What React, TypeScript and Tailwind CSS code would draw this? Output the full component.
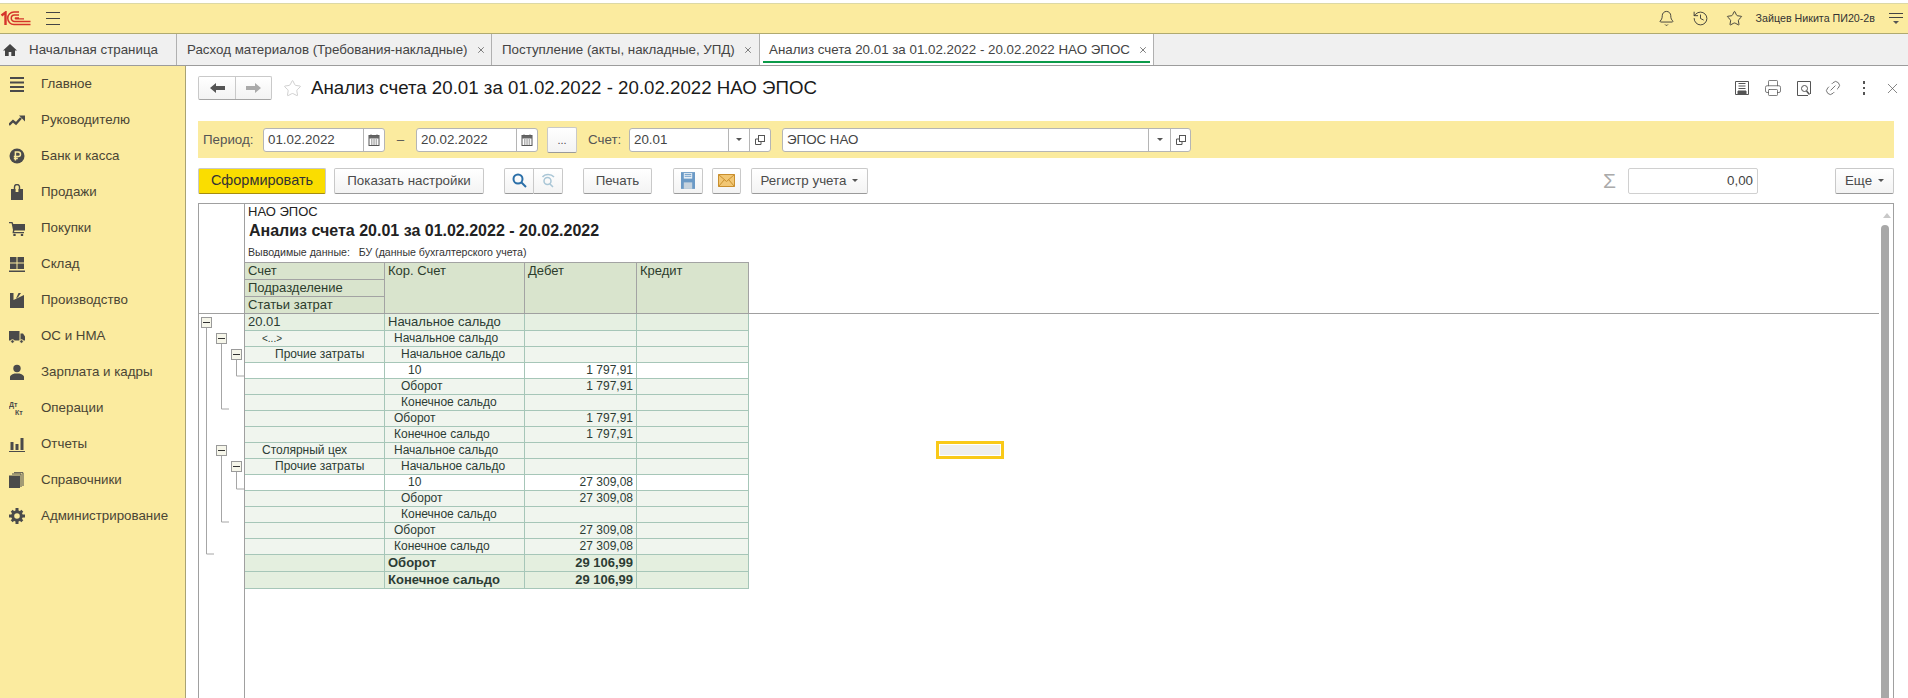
import { Bell, History, Star, Printer, Link2, X } from 'lucide-react';
import type { ReactNode } from 'react';

// ── Small icons ──────────────────────────────────

function CalendarIcon() {
  return (
    <svg width="12" height="12" viewBox="0 0 12 12">
      <path d="M3 0.5v2M9 0.5v2" stroke="#444" />
      <rect x="1" y="1.5" width="10" height="10" fill="#fff" stroke="#555" />
      <rect x="1" y="1.5" width="10" height="3" fill="#666" />
      <path d="M3 6h1.5M5.3 6h1.5M7.6 6h1.5M3 8h1.5M5.3 8h1.5M7.6 8h1.5M3 10h1.5M5.3 10h1.5M7.6 10h1.5" stroke="#666" />
    </svg>
  );
}

function OpenIcon() {
  return (
    <svg width="12" height="12" viewBox="0 0 12 12" fill="none" stroke="#555">
      <rect x="4.5" y="1.5" width="6" height="6" />
      <path d="M4 5H1.5v5.5H7V8" />
    </svg>
  );
}

function Caret() {
  return <span className="inline-block w-0 h-0 border-x-[3px] border-x-transparent border-t-[3px] border-t-[#555]" />;
}

const sideIcons: Record<string, ReactNode> = {
  main: <path d="M1 1h14v2H1zM1 5.5h14v2H1zM1 10h14v2H1zM1 14h14v2H1z" />,
  boss: (
    <>
      <path d="M0 13l4-4 3 2.5L12 6" fill="none" stroke="#4a4a4a" strokeWidth="2.4" />
      <path d="M10 3.5h6v6z" />
    </>
  ),
  bank: (
    <>
      <circle cx="8" cy="8" r="7.5" />
      <path d="M6.4 12.5V4h2.8a2 2 0 0 1 0 4.6H4.8M4.8 10.5h4" fill="none" stroke="#fbeb9f" strokeWidth="1.5" />
    </>
  ),
  sales: (
    <>
      <path d="M2 5h12v11H2z" />
      <path d="M5.5 8V3a2.5 2.5 0 0 1 5 0v5" fill="none" stroke="#4a4a4a" strokeWidth="1.4" />
      <path d="M6.6 5h2.8v3H6.6z" fill="#fbeb9f" />
    </>
  ),
  buy: (
    <>
      <path d="M0 2h3.5l.8 2H16v6.5H5.5L5 12h10v1.2H3.5L4 10 2.6 3.2H0z" />
      <circle cx="5.5" cy="15" r="1.3" />
      <circle cx="13" cy="15" r="1.3" />
    </>
  ),
  store: <path d="M1 1h6.5v5.5H1zM8.5 1H15v5.500H8.500zM1 7.500h6.500V13H1zM8.500 7.500H15V13H8.500zM0 14.500h16V16H0z" />,
  factory: <path d="M1 16V1h3.500v7L15 3v13zM7 6.500L9.500 1H12L9 5.300z" />,
  truck: (
    <>
      <path d="M0 3h10.500v9.500H0zM11.500 5.500H14l2 3v4h-4.500z" />
      <circle cx="3.500" cy="13.500" r="1.800" stroke="#fbeb9f" />
      <circle cx="12.500" cy="13.500" r="1.800" stroke="#fbeb9f" />
    </>
  ),
  person: (
    <>
      <circle cx="8" cy="4.500" r="3.700" />
      <path d="M1 16v-3c0-2 3-3 4.500-3.500h5c1.500.5 4.500 1.500 4.500 3.500v3z" />
    </>
  ),
  reports: <path d="M1.500 6h3v8h-3zM6.500 8h3v6h-3zM11.500 2h3v12h-3zM0 15h16v1H0z" />,
  refs: (
    <>
      <path d="M0 3.500h11V16H0z" />
      <path d="M12 15V2H3M14 14V.7H5" fill="none" stroke="#4a4a4a" />
    </>
  ),
  gear: (
    <>
      <circle cx="8" cy="8" r="4.300" fill="none" stroke="#4a4a4a" strokeWidth="3" />
      <path d="M6.500 0h3v3h-3zM6.500 13h3v3h-3zM0 6.500h3v3H0zM13 6.500h3v3h-3zM1.700 3.800l2-2 2 2-2 2zM10.300 3.800l2-2 2 2-2 2zM1.700 12.200l2-2 2 2-2 2zM10.300 12.200l2-2 2 2-2 2z" />
    </>
  ),
};

const SIDE_ITEMS = [
  ['main', 'Главное'],
  ['boss', 'Руководителю'],
  ['bank', 'Банк и касса'],
  ['sales', 'Продажи'],
  ['buy', 'Покупки'],
  ['store', 'Склад'],
  ['factory', 'Производство'],
  ['truck', 'ОС и НМА'],
  ['person', 'Зарплата и кадры'],
  ['ops', 'Операции'],
  ['reports', 'Отчеты'],
  ['refs', 'Справочники'],
  ['gear', 'Администрирование'],
];

function Btn({ className = '', children }: { className?: string; children: ReactNode }) {
  return (
    <div className={`h-[26px] flex items-center justify-center rounded-[2px] border border-[#c9c9c9] border-b-[#9a9a9a] bg-linear-to-b from-white to-[#f3f3f3] text-[#4b4b4b] ${className}`}>
      {children}
    </div>
  );
}

function Field({ text, className, icons, iconW }: { text: string; className: string; icons: ReactNode[]; iconW: number[] }) {
  return (
    <div className={`h-[24px] flex rounded-[3px] border border-[#b5b5b5] bg-white text-[#444] ${className}`}>
      <div className="flex-1 pl-[4px] leading-[22px]">{text}</div>
      {icons.map((ic, i) => (
        <div key={i} className="flex items-center justify-center border-l border-[#b5b5b5]" style={{ width: iconW[i] }}>
          {ic}
        </div>
      ))}
    </div>
  );
}

// ── Report data ──────────────────────────────────

type Row = { a?: string; aPad?: number; b?: string; bPad?: number; d?: string; kind?: 'top' | 'white' | 'total' };

const ROWS: Row[] = [
  { a: '20.01', aPad: 3, b: 'Начальное сальдо', bPad: 3, kind: 'top' },
  { a: '<...>', aPad: 17, b: 'Начальное сальдо', bPad: 9 },
  { a: 'Прочие затраты', aPad: 30, b: 'Начальное сальдо', bPad: 16 },
  { b: '10', bPad: 23, d: '1 797,91', kind: 'white' },
  { b: 'Оборот', bPad: 16, d: '1 797,91' },
  { b: 'Конечное сальдо', bPad: 16 },
  { b: 'Оборот', bPad: 9, d: '1 797,91' },
  { b: 'Конечное сальдо', bPad: 9, d: '1 797,91' },
  { a: 'Столярный цех', aPad: 17, b: 'Начальное сальдо', bPad: 9 },
  { a: 'Прочие затраты', aPad: 30, b: 'Начальное сальдо', bPad: 16 },
  { b: '10', bPad: 23, d: '27 309,08', kind: 'white' },
  { b: 'Оборот', bPad: 16, d: '27 309,08' },
  { b: 'Конечное сальдо', bPad: 16 },
  { b: 'Оборот', bPad: 9, d: '27 309,08' },
  { b: 'Конечное сальдо', bPad: 9, d: '27 309,08' },
  { b: 'Оборот', bPad: 3, d: '29 106,99', kind: 'total' },
  { b: 'Конечное сальдо', bPad: 3, d: '29 106,99', kind: 'total' },
];

function TreeBox({ x, y }: { x: number; y: number }) {
  return (
    <g>
      <rect x={x + 0.5} y={y + 0.5} width="10" height="10" fill="#f6f6ea" stroke="#9a9a9a" />
      <path d={`M${x + 2} ${y + 5.5}h7`} stroke="#333" />
    </g>
  );
}

function Tree() {
  // coordinates are local to the gutter: x-199, y-314
  return (
    <svg width="45" height="280" className="shrink-0" fill="none">
      <path d="M7.500 13V240H15" stroke="#a6a6a6" />
      <path d="M22.500 29V95H30" stroke="#a6a6a6" />
      <path d="M37.500 45V62H45" stroke="#a6a6a6" />
      <path d="M22.500 141V208H30" stroke="#a6a6a6" />
      <path d="M37.500 157V175H45" stroke="#a6a6a6" />
      <TreeBox x={2} y={3} />
      <TreeBox x={17} y={19} />
      <TreeBox x={32} y={35} />
      <TreeBox x={17} y={131} />
      <TreeBox x={32} y={147} />
    </svg>
  );
}

const HEAD_CELL = 'border-r border-[#a3a3a3] bg-[#d9e4cd] px-[3px] leading-[16px] text-[#2c3c2c]';

export default function App() {
  return (
    <div className="w-[1908px] h-[698px] overflow-hidden flex flex-col bg-white text-[13.33px] font-['Liberation_Sans',Arial,sans-serif]">
      {/* Top bar */}
      <div className="h-[31px] shrink-0 mt-[3px] bg-[#fbeb9f] border-t border-t-[#dcd8a6] border-b border-b-[#b0aa70] flex items-center relative">
        <svg width="31" height="15" viewBox="0 0 31 15" fill="none">
          <path d="M1.500 4.500L5.500 1.500V14" stroke="#d5342b" strokeWidth="2.400" />
          <path d="M19 1h-5a6.200 6.200 0 0 0 0 12.500H30.500" stroke="#d5342b" strokeWidth="1.500" />
          <path d="M19 4h-4.500a3.200 3.200 0 0 0 0 6.500H30.500" stroke="#d5342b" strokeWidth="1.500" />
          <path d="M19 6.800h-3.500a.6.6 0 0 0 0 1H24" stroke="#d5342b" strokeWidth="1.200" />
        </svg>
        <div className="ml-[15px] w-[14px] flex flex-col gap-[5px]">
          <div className="h-px bg-[#444]" />
          <div className="h-px bg-[#444]" />
          <div className="h-px bg-[#444]" />
        </div>
        <div className="ml-auto flex items-center text-[#333]">
          <Bell size={17} strokeWidth={1.25} />
          <History size={17} strokeWidth={1.25} className="ml-[17px]" />
          <Star size={17} strokeWidth={1.25} className="ml-[17px]" />
          <span className="ml-[13px] text-[10.7px]">Зайцев Никита ПИ20-2в</span>
          <div className="ml-[14px] mr-[5px] w-[14px] flex flex-col items-center gap-[3px]">
            <div className="h-px w-full bg-[#444]" />
            <div className="h-px w-full bg-[#444]" />
            <Caret />
          </div>
        </div>
      </div>

      {/* Tabs */}
      <div className="h-[32px] shrink-0 bg-[#f0f0f0] border-b border-[#9c9c9c] flex text-[#444]">
        <div className="w-[177px] border-r border-[#b0b0b0] flex items-center">
          <svg width="14" height="12" viewBox="0 0 14 12" className="ml-[3px]" fill="#444">
            <path d="M7 0L14 6.500H12V12H8.300V8H5.700v4H2V6.500H0z" />
          </svg>
          <span className="ml-[12px]">Начальная страница</span>
        </div>
        <div className="w-[315px] border-r border-[#b0b0b0] flex items-center pl-[10px]">
          <span>Расход материалов (Требования-накладные)</span>
          <X size={10} className="ml-[8px] text-[#666]" />
        </div>
        <div className="w-[268px] border-r border-[#b0b0b0] flex items-center pl-[10px]">
          <span>Поступление (акты, накладные, УПД)</span>
          <X size={10} className="ml-[8px] text-[#666]" />
        </div>
        <div className="w-[394px] border-r border-[#b0b0b0] bg-white flex items-center pl-[9px] relative">
          <span>Анализ счета 20.01 за 01.02.2022 - 20.02.2022 НАО ЭПОС</span>
          <X size={10} className="ml-[8px] text-[#666]" />
          <div className="absolute left-[3px] right-[3px] bottom-[2px] h-[2px] bg-[#0c9b4a]" />
        </div>
      </div>

      <div className="flex-1 flex min-h-0">
        {/* Sidebar */}
        <div className="w-[186px] shrink-0 bg-[#fbeb9f] border-r border-[#a8a274] text-[#4a4535]">
          {SIDE_ITEMS.map(([key, label]) => (
            <div key={key} className="h-[36px] flex items-center">
              <div className="w-[34px] flex justify-center">
                {key === 'ops' ? (
                  <svg width="16" height="16" viewBox="0 0 16 16" fill="#4a4a4a" fontSize="7" fontWeight="700">
                    <text x="0" y="7" fontFamily="Liberation Sans">Дт</text>
                    <text x="6" y="15" fontFamily="Liberation Sans">Кт</text>
                  </svg>
                ) : (
                  <svg width="16" height="16" viewBox="0 0 16 16" fill="#4a4a4a">
                    {sideIcons[key]}
                  </svg>
                )}
              </div>
              <span className="ml-[7px]">{label}</span>
            </div>
          ))}
        </div>

        {/* Content */}
        <div className="flex-1 min-w-0 pl-[12px] pr-[14px] flex flex-col">
          {/* Title row */}
          <div className="h-[24px] mt-[10px] mb-[21px] shrink-0 flex items-center">
            <div className="flex w-[74px] h-[24px] rounded-[2px] border border-[#c9c9c9] border-b-[#a5a5a5] bg-linear-to-b from-white to-[#f3f3f3]">
              <div className="w-[37px] border-r border-[#c9c9c9] flex items-center justify-center">
                <svg width="15" height="10" viewBox="0 0 15 10" fill="#555"><path d="M0 5l6-5v3h9v4H6v3z" /></svg>
              </div>
              <div className="flex-1 flex items-center justify-center">
                <svg width="15" height="10" viewBox="0 0 15 10" fill="#aaa"><path d="M15 5L9 0v3H0v4h9v3z" /></svg>
              </div>
            </div>
            <Star size={19} strokeWidth={1} className="ml-[11px] text-[#c4c4c4]" />
            <h1 className="ml-[9px] text-[18.7px] text-[#1a1a1a] leading-none">Анализ счета 20.01 за 01.02.2022 - 20.02.2022 НАО ЭПОС</h1>
            <div className="ml-auto flex items-center text-[#555]">
              <svg width="16" height="16" viewBox="0 0 16 16" fill="none" stroke="#555"><path d="M1.500 1.500h13v13h-13zM4.500 3.500h7M4.500 6h7M4.500 8.500h7" /><path d="M4 11h8v3.500H4z" fill="#555" /></svg>
              <Printer size={18} strokeWidth={1} className="ml-[14px]" />
              <svg width="16" height="17" viewBox="0 0 16 17" fill="none" stroke="#555" className="ml-[14px]"><path d="M14.500 14V1.500h-13v14H12" /><circle cx="8.500" cy="8.500" r="3" /><path d="M10.500 11l3 3.500" strokeWidth="1.500" /></svg>
              <Link2 size={18} strokeWidth={1.1} className="ml-[12px] -rotate-45 text-[#666]" />
              <div className="ml-[21px] flex flex-col gap-[3px]">
                <div className="w-[2.5px] h-[2.5px] bg-[#555]" />
                <div className="w-[2.5px] h-[2.5px] bg-[#555]" />
                <div className="w-[2.5px] h-[2.5px] bg-[#555]" />
              </div>
              <X size={17} strokeWidth={1} className="ml-[19px] -mr-[7px]" />
            </div>
          </div>

          {/* Filter bar */}
          <div className="h-[37px] shrink-0 bg-[#fbeb9f] flex items-center text-[#555] pl-[5px]">
            <span className="w-[60px]">Период:</span>
            <Field text="01.02.2022" className="w-[122px]" icons={[<CalendarIcon key="c" />]} iconW={[21]} />
            <span className="w-[31px] text-center">–</span>
            <Field text="20.02.2022" className="w-[122px]" icons={[<CalendarIcon key="c" />]} iconW={[21]} />
            <Btn className="ml-[9px] w-[30px] !h-[26px] items-end pb-[3px] text-[11px]">...</Btn>
            <span className="ml-[11px] w-[41px]">Счет:</span>
            <Field text="20.01" className="w-[142px]" icons={[<Caret key="a" />, <OpenIcon key="b" />]} iconW={[21, 21]} />
            <Field text="ЭПОС НАО" className="ml-[11px] w-[409px]" icons={[<Caret key="a" />, <OpenIcon key="b" />]} iconW={[22, 20]} />
          </div>

          {/* Command bar */}
          <div className="h-[45px] shrink-0 flex items-center text-[#4b4b4b]">
            <Btn className="w-[128px] bg-none bg-[#fadd00] border-[#c9ad10] border-b-[#a58c10] !text-[#333] text-[14.5px]">Сформировать</Btn>
            <Btn className="ml-[8px] w-[150px]">Показать настройки</Btn>
            <div className="ml-[20px] flex">
              <Btn className="w-[30px] rounded-r-none">
                <svg width="15" height="15" viewBox="0 0 15 15" fill="none" stroke="#2b6fa8" strokeWidth="2"><circle cx="6" cy="6" r="4.500" /><path d="M9.500 9.500l4.500 4.500" /></svg>
              </Btn>
              <Btn className="w-[29px] rounded-l-none border-l-0">
                <svg width="15" height="15" viewBox="0 0 15 15" fill="none" stroke="#a9c6d6" strokeWidth="1.500"><circle cx="6.500" cy="8" r="3.500" /><path d="M9 11l3 3M1.500 4C4 .5 10 .5 13 4" /></svg>
              </Btn>
            </div>
            <Btn className="ml-[20px] w-[69px]">Печать</Btn>
            <Btn className="ml-[21px] w-[30px]">
              <svg width="14" height="17" viewBox="0 0 15 18"><path d="M0 0h15v18H0z" fill="#6b9ac6" /><path d="M3 1h9v6H3z" fill="#e6eef5" /><path d="M3 11h9v7H3z" fill="#c6d3de" /><path d="M4 2.500h7M4 4.500h7" stroke="#6b9ac6" /></svg>
            </Btn>
            <Btn className="ml-[9px] w-[29px]">
              <svg width="17" height="13" viewBox="0 0 17 13"><path d="M.5.500h16v12H.500z" fill="#f2c774" stroke="#c98f2e" /><path d="M.5.500l8 7 8-7M.5 12.500l6-7M16.500 12.500l-6-7" fill="none" stroke="#c98f2e" /></svg>
            </Btn>
            <Btn className="ml-[10px] w-[117px]">
              <span>Регистр учета</span>
              <span className="ml-[6px] flex"><Caret /></span>
            </Btn>
            <div className="ml-auto flex items-center">
              <span className="text-[21px] leading-none text-[#aaa]">Σ</span>
              <div className="ml-[12px] w-[130px] h-[26px] rounded-[2px] border border-[#d0d0d0] text-right pr-[4px] leading-[24px] text-[#444]">0,00</div>
              <Btn className="ml-[77px] w-[59px]">
                <span>Еще</span>
                <span className="ml-[6px] flex"><Caret /></span>
              </Btn>
            </div>
          </div>

          {/* Report */}
          <div className="flex-1 min-h-0 relative overflow-hidden border-x border-t border-[#a0a0a0] flex flex-col text-[#2c3c34]">
            <div className="w-[1680px] h-[110px] shrink-0 border-b border-[#a0a0a0] flex">
              <div className="w-[45px] shrink-0" />
              <div className="flex-1 border-l border-[#a0a0a0]">
                <div className="h-[15px] pl-[3px] text-[13px] leading-[15px] text-[#222]">НАО ЭПОС</div>
                <div className="h-[24px] pl-[4px] text-[16px] leading-[24px] font-bold text-[#222]">Анализ счета 20.01 за 01.02.2022 - 20.02.2022</div>
                <div className="h-[19px] pl-[3px] text-[10.6px] leading-[19px] text-[#333]">Выводимые данные:&nbsp;&nbsp;&nbsp;БУ (данные бухгалтерского учета)</div>
                <div className="w-[504px] h-[51px] border-t border-[#a3a3a3] flex text-[13px]">
                  <div className="w-[140px] flex flex-col">
                    <div className={`${HEAD_CELL} h-[17px] border-b`}>Счет</div>
                    <div className={`${HEAD_CELL} h-[17px] border-b`}>Подразделение</div>
                    <div className={`${HEAD_CELL} h-[16px]`}>Статьи затрат</div>
                  </div>
                  <div className={`${HEAD_CELL} w-[140px]`}>Кор. Счет</div>
                  <div className={`${HEAD_CELL} w-[112px]`}>Дебет</div>
                  <div className={`${HEAD_CELL} w-[112px]`}>Кредит</div>
                </div>
              </div>
            </div>
            <div className="flex-1 flex">
              <Tree />
              <div className="flex-1 border-l border-[#a0a0a0]">
                {ROWS.map((r, i) => {
                  const bg = r.kind === 'white' ? 'bg-white' : r.kind === 'top' ? 'bg-[#e6f0e2]' : r.kind === 'total' ? 'bg-[#e4efdf]' : 'bg-[#f0f5ee]';
                  const big = r.kind === 'top' || r.kind === 'total';
                  const cell = `border-r border-[#a6c6b8] truncate ${big ? 'leading-[16px]' : 'leading-[15px]'}`;
                  return (
                    <div key={i} className={`w-[504px] flex border-b border-[#a6c6b8] ${bg} ${big ? 'h-[17px] text-[13px]' : 'h-[16px] text-[12px]'} ${r.kind === 'total' ? 'font-bold' : ''}`}>
                      <div className={`${cell} w-[140px] ${r.a === '<...>' ? 'text-[10px]' : ''}`} style={{ paddingLeft: r.aPad }}>{r.a}</div>
                      <div className={`${cell} w-[140px]`} style={{ paddingLeft: r.bPad }}>{r.b}</div>
                      <div className={`${cell} w-[112px] text-right pr-[3px]`}>{r.d}</div>
                      <div className={`${cell} w-[112px]`} />
                    </div>
                  );
                })}
              </div>
            </div>
            {/* Selected cell */}
            <div className="absolute left-[737px] top-[237px] w-[68px] h-[18px] border-[3px] border-[#f9c918] bg-[#eeeeee] shadow-[inset_0_0_0_1px_#fff]" />
            {/* Scrollbar */}
            <div className="absolute left-[1684px] top-[9px] w-0 h-0 border-x-[4px] border-x-transparent border-b-[5px] border-b-[#c8c8c8]" />
            <div className="absolute left-[1682px] top-[21px] w-[8px] h-[600px] rounded-t-[4px] bg-[#a8a8a8]" />
          </div>
        </div>
      </div>
    </div>
  );
}
